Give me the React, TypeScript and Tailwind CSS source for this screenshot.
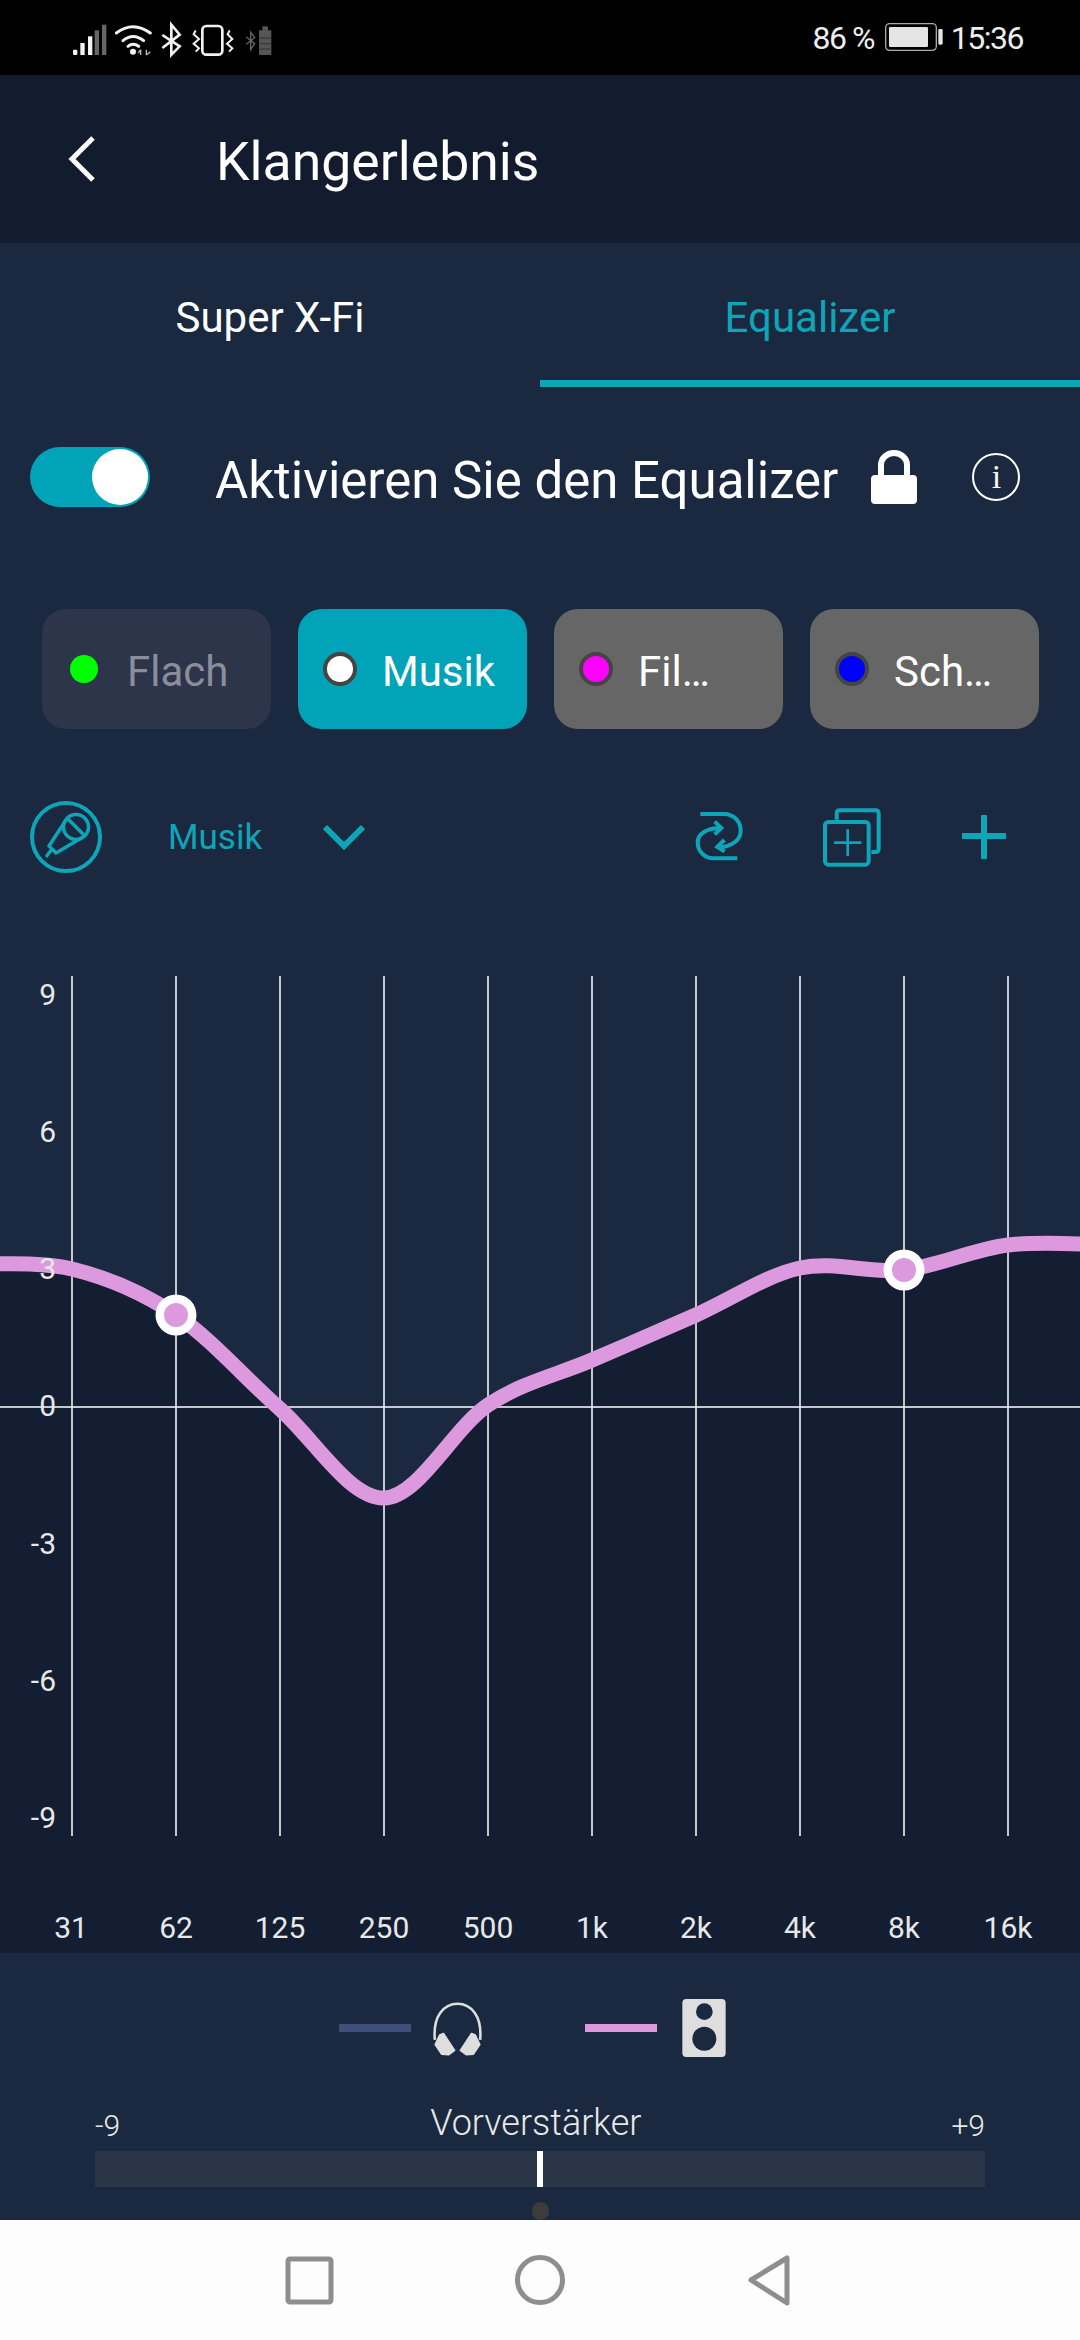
import React from "react";

const TEAL = "#0fa5b8";
const PINK = "#dd99dd";

const pts: [number, number][] = [
  [-32, 1264], [72, 1269], [176, 1315], [280, 1409], [384, 1498], [488, 1405],
  [592, 1360], [696, 1315], [800, 1268], [904, 1270], [1008, 1245], [1112, 1245],
];

function curvePath() {
  let d = `M${pts[0][0]} ${pts[0][1]}`;
  for (let i = 0; i < pts.length - 1; i++) {
    const p0 = pts[Math.max(0, i - 1)];
    const p1 = pts[i];
    const p2 = pts[i + 1];
    const p3 = pts[Math.min(pts.length - 1, i + 2)];
    const c1x = p1[0] + (p2[0] - p0[0]) / 6;
    const c1y = p1[1] + (p2[1] - p0[1]) / 6;
    const c2x = p2[0] - (p3[0] - p1[0]) / 6;
    const c2y = p2[1] - (p3[1] - p1[1]) / 6;
    d += ` C${c1x} ${c1y} ${c2x} ${c2y} ${p2[0]} ${p2[1]}`;
  }
  return d;
}

function StatusLeft() {
  return (
    <svg width="200" height="70" viewBox="100 0 600 210" className="ml-[73px]">
      <g fill="#f2f2f2">
        <rect x="100" y="140" width="13" height="16" rx="3" />
        <rect x="122" y="120" width="13" height="36" />
        <rect x="145" y="100" width="13" height="56" />
      </g>
      <g fill="#666">
        <rect x="165" y="82" width="13" height="74" />
        <rect x="187" y="65" width="13" height="91" />
      </g>
      <g fill="none" stroke="#f2f2f2" strokeWidth="9" strokeLinecap="round">
        <path d="M230 90 Q280 52 332 90" />
        <path d="M250 113 Q280 88 312 113" />
        <path d="M265 130 Q280 118 297 130" />
      </g>
      <circle cx="280" cy="146" r="9" fill="#f2f2f2" />
      <path d="M303 140 V156 M303 140 L296 150 M320 140 V156 M320 156 L332 146" stroke="#bbb" strokeWidth="4" fill="none" />
      <path d="M368 96 L420 130 L395 155 V65 L420 95 L368 135" fill="none" stroke="#f2f2f2" strokeWidth="8" />
      <rect x="488" y="69" width="60" height="86" rx="12" fill="none" stroke="#f2f2f2" strokeWidth="8" />
      <path d="M468 82 L462 94 L478 108 L462 122 L478 136 L468 146" fill="none" stroke="#f2f2f2" strokeWidth="6" />
      <path d="M570 82 L564 94 L578 108 L562 122 L578 136 L568 146" fill="none" stroke="#f2f2f2" strokeWidth="6" />
      <path d="M620 102 L645 122 L633 140 V88 L645 104 L620 124" fill="none" stroke="#666" strokeWidth="4" />
      <rect x="668" y="70" width="17" height="14" fill="#555" />
      <rect x="658" y="82" width="37" height="74" rx="2" fill="#555" />
      <path d="M658 105 H695 M658 122 H695 M658 138 H695" stroke="#333" strokeWidth="3" />
    </svg>
  );
}

function BatteryIcon() {
  return (
    <svg width="58" height="30" viewBox="0 0 174 90">
      <rect x="2" y="2" width="152" height="80" rx="12" fill="none" stroke="#aaa" strokeWidth="4" />
      <rect x="12" y="12" width="117" height="60" rx="4" fill="#e5e5e5" />
      <rect x="160" y="18" width="13" height="47" rx="4" fill="#e5e5e5" />
    </svg>
  );
}

function Toggle() {
  return (
    <div className="w-[120px] h-[60px] rounded-full bg-[#00a3b7] flex items-center justify-end pr-[2px] shrink-0">
      <div className="w-[56px] h-[56px] rounded-full bg-white" />
    </div>
  );
}

function Lock() {
  return (
    <svg width="46" height="54" viewBox="0 0 46 54" className="shrink-0">
      <path d="M10 28 V15 A13 12 0 0 1 36 15 V28" fill="none" stroke="#fff" strokeWidth="6" />
      <rect x="0" y="25" width="46" height="29" rx="4" fill="#fff" />
    </svg>
  );
}

function Preset({ label, dot, bg, text, ring }: { label: string; dot: string; bg: string; text: string; ring: boolean }) {
  return (
    <div className={`w-[229px] h-[120px] rounded-[24px] flex items-center ${ring ? "pl-[25px]" : "pl-[28px]"} ${bg}`}>
      <div
        className={`rounded-full shrink-0 ${ring ? "w-[34px] h-[34px] border-[4px] border-[#444444]" : "w-[28px] h-[28px]"} ${dot}`}
      />
      <span className={`text-[42px] leading-none pt-[5px] ${ring ? "ml-[25px]" : "ml-[29px]"} ${text}`}>{label}</span>
    </div>
  );
}

function MicIcon() {
  return (
    <svg width="72" height="72" viewBox="0 0 72 72" fill="none" stroke={TEAL} className="shrink-0">
      <circle cx="36" cy="36" r="34" strokeWidth="4" />
      <g strokeWidth="3.5" strokeLinejoin="round">
        <circle cx="46" cy="26" r="12.5" />
        <path d="M37 17 L55 35" />
        <path d="M36 19 L19 45 L26 52 L53 36" />
        <path d="M22 48 L16 56" />
      </g>
    </svg>
  );
}

function RepeatIcon() {
  return (
    <svg width="56.67" height="56.67" viewBox="100 90 170 170" fill="none" stroke={TEAL} strokeWidth="12">
      <path d="M125 105 H195 C228 105 246 130 246 155 C246 185 215 205 180 205" />
      <path d="M197 183 L176 204 L198 218" />
      <path d="M236 238 H165 C135 238 117 215 117 190 C117 165 145 147 185 147" />
      <path d="M168 128 L188 147 L168 166" />
    </svg>
  );
}

function CopyAddIcon() {
  return (
    <svg width="60" height="60" viewBox="485 80 180 180" fill="none" stroke={TEAL} className="ml-[72px]">
      <path d="M532 118 V100 Q532 90 542 90 H648 Q658 90 658 100 V205 Q658 215 648 215 H636" strokeWidth="12" />
      <rect x="497" y="125" width="131" height="128" rx="10" strokeWidth="12" />
      <path d="M524 187 H606 M565 147 V227" strokeWidth="8" />
    </svg>
  );
}

function PlusIcon() {
  return (
    <svg width="44" height="44" viewBox="0 0 44 44" className="ml-[81px]">
      <path d="M0 21 H44 M22 0 V44" stroke={TEAL} strokeWidth="6" />
    </svg>
  );
}

function Chart() {
  const xs = [72, 176, 280, 384, 488, 592, 696, 800, 904, 1008];
  const freq = ["31", "62", "125", "250", "500", "1k", "2k", "4k", "8k", "16k"];
  const ylabels: [string, number][] = [
    ["9", 994], ["6", 1131], ["3", 1268], ["0", 1405], ["-3", 1543], ["-6", 1680], ["-9", 1817],
  ];
  const d = curvePath();
  return (
    <svg width="1080" height="977" viewBox="0 976 1080 977" className="block mt-[103px]" style={{ fontFamily: "Roboto, sans-serif" }}>
      <path d={`${d} L1112 1953 L-32 1953 Z`} fill="#141e33" />
      {xs.map((x) => (
        <line key={x} x1={x} x2={x} y1="976" y2="1836" stroke="#fff" strokeWidth="1.5" />
      ))}
      <line x1="0" x2="1080" y1="1407" y2="1407" stroke="#fff" strokeWidth="1.5" />
      <path d={d} fill="none" stroke={PINK} strokeWidth="15" />
      {[[176, 1315], [904, 1270]].map(([x, y]) => (
        <g key={x}>
          <circle cx={x} cy={y} r="20.5" fill="#fff" />
          <circle cx={x} cy={y} r="12" fill={PINK} />
        </g>
      ))}
      {ylabels.map(([t, y]) => (
        <text key={t} x="56" y={y + 11} textAnchor="end" fontSize="30" fill="#e8e8e8">{t}</text>
      ))}
      {freq.map((t, i) => (
        <text key={t} x={xs[i] - (i === 0 ? 1 : 0)} y="1938" textAnchor="middle" fontSize="30" fill="#e8e8e8">{t}</text>
      ))}
    </svg>
  );
}

function Headphones() {
  return (
    <svg width="51" height="57" viewBox="362 52 160 175" className="ml-[21px]">
      <path d="M371 175 C364 100 400 62 442 62 C484 62 520 100 513 175" fill="none" stroke="#dedede" strokeWidth="8" />
      <path d="M386 160 L398 155 L433 208 L414 222 L392 220 L372 190 Z" fill="#dedede" strokeLinejoin="round" stroke="#dedede" strokeWidth="5" />
      <path d="M498 160 L486 155 L451 208 L470 222 L492 220 L512 190 Z" fill="#dedede" strokeLinejoin="round" stroke="#dedede" strokeWidth="5" />
    </svg>
  );
}

function Speaker() {
  return (
    <svg width="44" height="58" viewBox="1117 57 130 174" className="ml-[25px]">
      <rect x="1117" y="57" width="130" height="174" rx="12" fill="#dedede" />
      <circle cx="1183" cy="95" r="25" fill="#1a2840" />
      <circle cx="1183" cy="176" r="36" fill="#1a2840" />
    </svg>
  );
}

function NavBar() {
  return (
    <div className="h-[120px] bg-[#fdfdfd] flex items-center justify-center shrink-0">
      <svg width="520" height="60" viewBox="280 2250 520 60" fill="none" stroke="#8e8e8e" strokeWidth="5" strokeLinejoin="round">
        <rect x="288" y="2259" width="43" height="43" rx="2" />
        <circle cx="540" cy="2280" r="22.5" />
        <path d="M787 2258 V2303 L751 2280 Z" />
      </svg>
    </div>
  );
}

export default function App() {
  return (
    <div className="w-[1080px] h-[2340px] flex flex-col overflow-hidden bg-[#1a2840] text-white" style={{ fontFamily: "Roboto, sans-serif" }}>
      <div className="h-[75px] bg-black flex items-center justify-between shrink-0">
        <StatusLeft />
        <div className="flex items-center text-[#eeeeee] text-[32px] tracking-[-1.5px] leading-none mr-[57px]">
          <span>86 %</span>
          <span className="ml-[11px] mr-[8px] flex"><BatteryIcon /></span>
          <span>15:36</span>
        </div>
      </div>

      <div className="h-[168px] bg-[#131c2e] flex items-center shrink-0">
        <svg width="30" height="48" viewBox="0 0 30 48" className="ml-[67px]" fill="none" stroke="#fff" strokeWidth="5">
          <path d="M26 3 L5 24 L26 45" />
        </svg>
        <span className="text-[53.5px] leading-none ml-[119px] pt-[6px]">Klangerlebnis</span>
      </div>

      <div className="h-[144px] flex shrink-0">
        <div className="w-[540px] flex items-center justify-center text-[42px] leading-none pt-[6px]">Super X-Fi</div>
        <div className="w-[540px] flex items-center justify-center text-[42px] leading-none pt-[13px] border-b-[7px] border-[#0fa5b8] text-[#0fa5b8]">
          Equalizer
        </div>
      </div>

      <div className="mt-[60px] h-[60px] flex items-center pl-[30px] shrink-0">
        <Toggle />
        <span className="text-[51px] leading-none ml-[65px] pt-[6px] whitespace-nowrap">Aktivieren Sie den Equalizer</span>
        <span className="ml-[33px] flex"><Lock /></span>
        <div className="ml-[55px] w-[48px] h-[48px] rounded-full border-2 border-white flex items-center justify-center text-[34px] leading-none" style={{ fontFamily: "'Liberation Serif', serif" }}>
          i
        </div>
      </div>

      <div className="mt-[102px] flex gap-[27px] pl-[42px] shrink-0">
        <Preset label="Flach" dot="bg-[#00ff00]" bg="bg-[#2c3549]" text="text-[#8b8e9a]" ring={false} />
        <Preset label="Musik" dot="bg-white" bg="bg-[#00a3b7]" text="text-white" ring />
        <Preset label="Fil…" dot="bg-[#ff00ff]" bg="bg-[#666666]" text="text-white" ring />
        <Preset label="Sch…" dot="bg-[#0000ff]" bg="bg-[#666666]" text="text-white" ring />
      </div>

      <div className="mt-[72px] h-[72px] flex items-center pl-[30px] shrink-0">
        <MicIcon />
        <span className="ml-[66px] text-[35px] leading-none text-[#0fa5b8]">Musik</span>
        <svg width="42" height="26" viewBox="0 0 42 26" className="ml-[61px]" fill="none" stroke={TEAL} strokeWidth="6">
          <path d="M2 3 L21 22 L40 3" />
        </svg>
        <div className="ml-auto mr-[74px] flex items-center">
          <RepeatIcon />
          <CopyAddIcon />
          <PlusIcon />
        </div>
      </div>

      <Chart />

      <div className="h-[267px] overflow-hidden shrink-0 flex flex-col">
        <div className="mt-[46px] flex items-center pl-[339px] h-[58px]">
          <div className="w-[72px] h-[8px] bg-[#3f4f7a]" />
          <Headphones />
          <div className="ml-[102px] w-[72px] h-[8px] bg-[#dd99dd]" />
          <Speaker />
        </div>
        <div className="mt-[48px] mx-[95px] flex items-center justify-between h-[36px] text-[#e8e8e8]">
          <span className="text-[30px] leading-none font-light pt-[5px]">-9</span>
          <span className="text-[36px] leading-none font-light">Vorverstärker</span>
          <span className="text-[30px] leading-none font-light pt-[5px]">+9</span>
        </div>
        <div className="mt-[10px] mx-[95px] h-[36px] bg-[#2b3548] flex justify-center shrink-0">
          <div className="w-[6px] h-full bg-white" />
        </div>
        <div className="mt-[15px] flex justify-center">
          <div className="w-[17px] h-[18px] rounded-full bg-[#3c3c3c] shrink-0" />
        </div>
      </div>

      <NavBar />
    </div>
  );
}
